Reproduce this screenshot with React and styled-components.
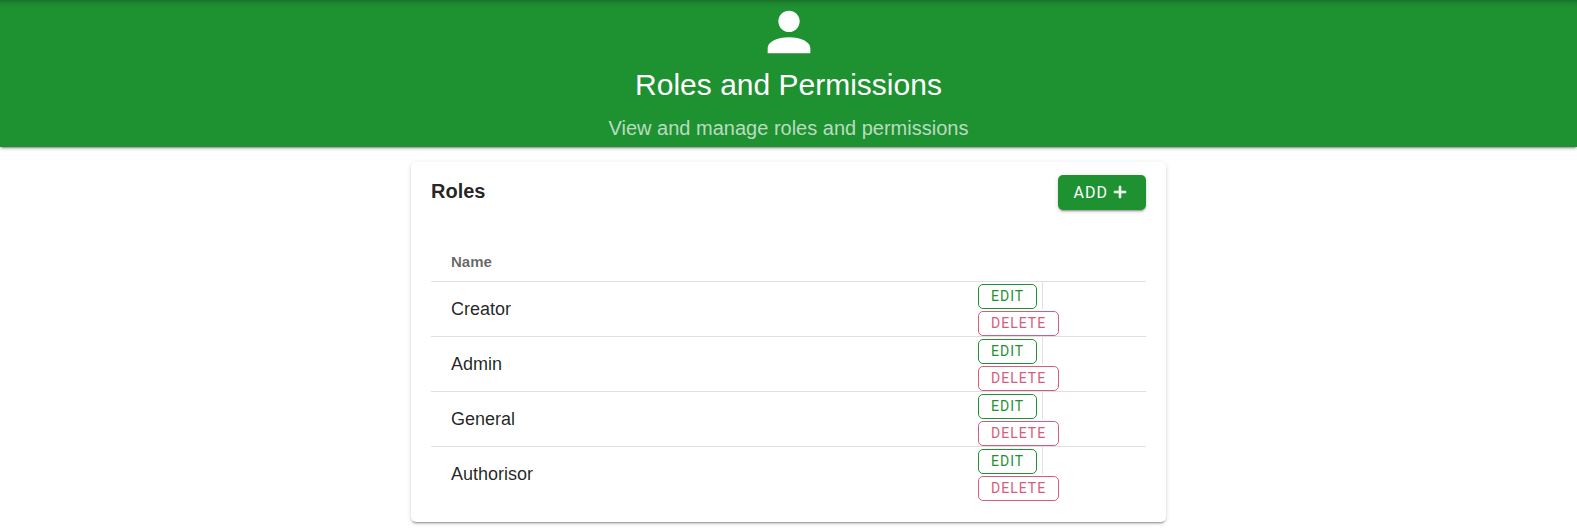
import React from "react";
import styled, { createGlobalStyle, ThemeProvider } from "styled-components";

const theme = {
  primary: "#1e9131",
  danger: "#d45d7d",
  line: "#e0e0e0",
  text: "rgba(0, 0, 0, 0.87)",
  muted: "rgba(0, 0, 0, 0.6)",
};

const GlobalStyle = createGlobalStyle`
  *, *::before, *::after { box-sizing: border-box; }
  body {
    margin: 0;
    background: #fff;
    color: ${theme.text};
    font-family: "Liberation Sans", Arial, sans-serif;
  }
`;

const Banner = styled.header`
  display: flex;
  flex-direction: column;
  align-items: center;
  padding-bottom: 3px;
  text-align: center;
  color: #fff;
  background:
    linear-gradient(rgba(0, 0, 0, 0.22), rgba(0, 0, 0, 0.08) 3px, transparent 8px),
    ${(p) => p.theme.primary};
  box-shadow:
    0 3px 1px -2px rgba(0, 0, 0, 0.2),
    0 2px 2px rgba(0, 0, 0, 0.14),
    0 1px 5px rgba(0, 0, 0, 0.12);
`;

const BannerIcon = styled.svg`
  width: 64px;
  height: 64px;
  fill: currentColor;
`;

const BannerTitle = styled.h1`
  margin: 0;
  font-size: 30px;
  font-weight: 400;
  line-height: 42px;
`;

const BannerSubtitle = styled.p`
  margin: 6px 0 0;
  font-size: 20px;
  line-height: 32px;
  color: rgba(255, 255, 255, 0.7);
`;

const Main = styled.main`
  display: flex;
  justify-content: center;
  padding: 15px 16px 8px;
`;

const Card = styled.section`
  width: 100%;
  max-width: 755px;
  padding: 13px 20px 20px;
  border-radius: 5px;
  background: #fff;
  box-shadow:
    0 3px 1px -2px rgba(0, 0, 0, 0.2),
    0 2px 2px rgba(0, 0, 0, 0.14),
    0 1px 5px rgba(0, 0, 0, 0.12);
`;

const CardHeader = styled.div`
  display: flex;
  align-items: flex-start;
  justify-content: space-between;
`;

const CardTitle = styled.h2`
  margin: 0;
  font-size: 20px;
  line-height: 32px;
`;

const Button = styled.button`
  display: inline-flex;
  align-items: center;
  justify-content: center;
  border-radius: 5px;
  font-family: Roboto, "Liberation Sans", sans-serif;
  letter-spacing: 1px;
  text-transform: uppercase;
  cursor: pointer;
`;

const AddButton = styled(Button)`
  gap: 2px;
  height: 35px;
  padding: 0 16px;
  border: 0;
  font-size: 16px;
  color: #fff;
  background: ${(p) => p.theme.primary};
  box-shadow:
    0 3px 1px -2px rgba(0, 0, 0, 0.2),
    0 2px 2px rgba(0, 0, 0, 0.14),
    0 1px 5px rgba(0, 0, 0, 0.12);

  svg {
    width: 20px;
    height: 22px;
    margin-bottom: 2px;
    fill: currentColor;
    stroke: currentColor;
  }
`;

const OutlineButton = styled(Button)`
  height: 25px;
  padding: 0 12px 2px;
  border: 1px solid currentColor;
  font-size: 14px;
  color: ${(p) => p.theme[p.$tone]};
  background: transparent;
`;

const RolesTable = styled.table`
  width: 100%;
  margin-top: 31px;
  border-collapse: separate;
  border-spacing: 0;
  table-layout: fixed;
`;

const HeadCell = styled.th`
  height: 41px;
  width: ${(p) => p.$width || "auto"};
  padding: 0 20px;
  border-bottom: 1px solid ${(p) => p.theme.line};
  font-size: 15px;
  text-align: left;
  color: ${(p) => p.theme.muted};
`;

const Cell = styled.td`
  padding: ${(p) => (p.$flush ? "0" : "0 20px")};
  border-bottom: 1px solid ${(p) => p.theme.line};
  font-size: 18px;

  tr:last-child > & {
    border-bottom-color: transparent;
  }
`;

const Actions = styled.div`
  display: flex;
  flex-direction: column;
  align-items: flex-start;
  gap: 2px;
`;

const EditSlot = styled.div`
  display: flex;
  padding: 2px 5px 0 0;
  border-right: 1px solid ${(p) => p.theme.line};
`;

const roles = ["Creator", "Admin", "General", "Authorisor"];

export default function App() {
  return (
    <ThemeProvider theme={theme}>
      <GlobalStyle />
      <Banner>
        <BannerIcon viewBox="0 0 24 24" aria-hidden="true">
          <path d="M12 4a4 4 0 0 1 4 4a4 4 0 0 1-4 4a4 4 0 0 1-4-4a4 4 0 0 1 4-4m0 10c4.420 0 8 1.790 8 4v2H4v-2c0-2.210 3.580-4 8-4" />
        </BannerIcon>
        <BannerTitle>Roles and Permissions</BannerTitle>
        <BannerSubtitle>View and manage roles and permissions</BannerSubtitle>
      </Banner>
      <Main>
        <Card aria-labelledby="roles-title">
          <CardHeader>
            <CardTitle id="roles-title">Roles</CardTitle>
            <AddButton type="button">
              Add
              <svg viewBox="0 0 24 24" aria-hidden="true">
                <path d="M19 13h-6v6h-2v-6H5v-2h6V5h2v6h6v2Z" />
              </svg>
            </AddButton>
          </CardHeader>
          <RolesTable aria-labelledby="roles-title">
            <thead>
              <tr>
                <HeadCell scope="col">Name</HeadCell>
                <HeadCell scope="col" $width="168px" aria-label="Actions" />
              </tr>
            </thead>
            <tbody>
              {roles.map((role) => (
                <tr key={role}>
                  <Cell>{role}</Cell>
                  <Cell $flush>
                    <Actions>
                      <EditSlot>
                        <OutlineButton type="button" $tone="primary" aria-label={`Edit ${role}`}>
                          Edit
                        </OutlineButton>
                      </EditSlot>
                      <OutlineButton type="button" $tone="danger" aria-label={`Delete ${role}`}>
                        Delete
                      </OutlineButton>
                    </Actions>
                  </Cell>
                </tr>
              ))}
            </tbody>
          </RolesTable>
        </Card>
      </Main>
    </ThemeProvider>
  );
}
